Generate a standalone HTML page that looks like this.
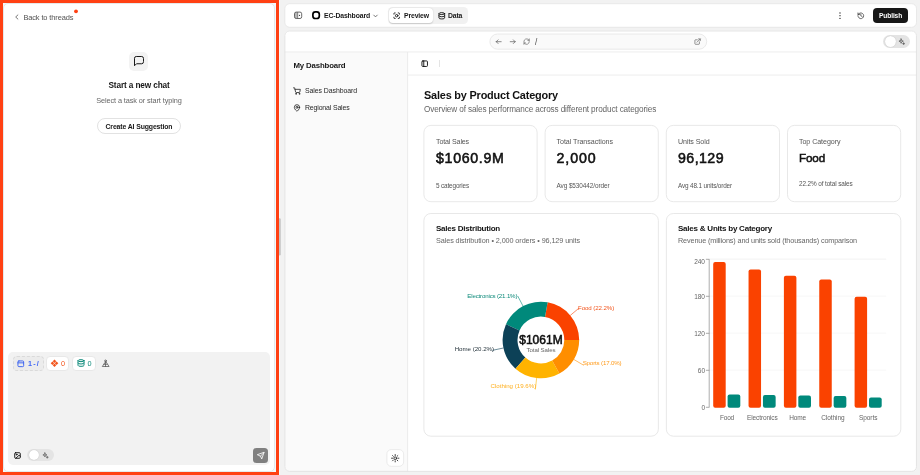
<!DOCTYPE html>
<html lang="en">
<head>
<meta charset="utf-8">
<title>EC-Dashboard</title>
<style>
*{box-sizing:border-box;margin:0;padding:0}
html,body{width:920px;height:475px;overflow:hidden;background:#f2f2f2;font-family:"Liberation Sans",sans-serif}
#app{position:relative;width:920px;height:475px;overflow:hidden;background:#f2f2f2}
#app div,#app svg,#app span{position:absolute}
.t{white-space:pre;display:block}
#txt{left:0;top:0;width:920px;height:475px;will-change:transform}
.card{background:#fff;border:1px solid #e4e4e4;border-radius:7px}
svg{overflow:visible}
.ic{fill:none;stroke:#222;stroke-width:1;stroke-linecap:round;stroke-linejoin:round}
</style>
</head>
<body>
<div id="app">
<!-- left chat panel with highlight frame -->
<div style="left:0;top:0;width:279px;height:475px;background:#f3f9fb"></div>
<div style="left:3px;top:3px;width:272px;height:469px;background:#fff;border:1px solid #e6e8ea;border-radius:5px"></div>
<div style="left:0;top:0;width:279px;height:475px;border:3px solid #ff4013"></div>
<div style="left:279px;top:0;width:1px;height:475px;background:#f4f9fa"></div>
<svg style="left:270px;top:210px" width="20" height="55" viewBox="270 210 20 55"><rect x="278.400" y="218.300" width="2.400" height="37.200" rx="1.200" fill="#c6c6c6"/><rect x="276" y="210" width="3" height="55" fill="#ff4013"/></svg>
<!-- back chevron -->
<svg style="left:13.700px;top:14.300px" width="6" height="6" viewBox="0 0 6 6"><path class="ic" style="stroke:#555;stroke-width:0.800" d="M3.900 0.900 L1.700 3 L3.900 5.100"/></svg>
<svg style="left:0;top:0" width="100" height="30"><circle cx="76" cy="11.3" r="1.9" fill="#ff4013"/></svg>
<!-- chat icon -->
<div style="left:129.3px;top:51.5px;width:19.2px;height:19.2px;border-radius:5px;background:#f3f3f3"></div>
<svg style="left:132.900px;top:54.900px" width="12" height="12" viewBox="0 0 24 24"><path class="ic" style="stroke-width:2;stroke:#1a1a1a" d="M21 14a3.500 3.500 0 0 1-3.500 3.500H7l-4 4V6.500A3.500 3.500 0 0 1 6.500 3h11A3.500 3.500 0 0 1 21 6.500z"/></svg>
<!-- create button -->
<div style="left:97.3px;top:118.2px;width:83.5px;height:15.5px;border-radius:8px;border:1px solid #e2e2e2;background:#fff"></div>
<!-- input area -->
<div style="left:8px;top:352px;width:262px;height:113px;border-radius:5px;background:#f2f2f2"></div>
<div style="left:13px;top:356px;width:30.6px;height:15px;border-radius:4px;border:1px dashed #dadada;background:#ececec"></div>
<div style="left:45.6px;top:356px;width:23.5px;height:15px;border-radius:4px;border:1px solid #e8e8e8;background:#fff"></div>
<div style="left:72px;top:356px;width:24.3px;height:15px;border-radius:4px;border:1px solid #e8e8e8;background:#fff"></div>
<!-- chip icons -->
<svg style="left:17px;top:359.5px" width="7.6" height="7.6" viewBox="0 0 24 24"><rect class="ic" style="stroke:#3b63f0;stroke-width:3" x="3" y="3" width="18" height="18" rx="3"/><path class="ic" style="stroke:#3b63f0;stroke-width:3" d="M3 9h18"/></svg>
<svg style="left:0;top:340px" width="120" height="40" viewBox="0 340 120 40"><g fill="#f2551d"><path d="M54.50 359.50L56.25 361.25L54.50 363.00L52.75 361.25Z"/><path d="M54.50 363.60L56.25 365.35L54.50 367.10L52.75 365.35Z"/><path d="M52.45 361.55L54.20 363.30L52.45 365.05L50.70 363.30Z"/><path d="M56.55 361.55L58.30 363.30L56.55 365.05L54.80 363.30Z"/></g></svg>
<svg style="left:76.8px;top:359.3px" width="8" height="8" viewBox="0 0 24 24"><g class="ic" style="stroke:#0d8a7a;stroke-width:3"><ellipse cx="12" cy="5" rx="9" ry="3"/><path d="M3 5v14a9 3 0 0 0 18 0V5"/><path d="M3 12a9 3 0 0 0 18 0"/></g></svg>
<svg style="left:0;top:340px" width="120" height="40" viewBox="0 340 120 40"><g fill="none" stroke="#555" stroke-width="0.75" stroke-linejoin="round" stroke-linecap="round"><circle cx="105.5" cy="360.9" r="0.9"/><path d="M105.5 361.800L102.300 366.500H108.700Z"/><path d="M103.800 364.300H107.200M105.500 361.800V366.500"/></g></svg>
<!-- bottom row -->
<svg style="left:14px;top:452px" width="7" height="7" viewBox="0 0 24 24"><g class="ic" style="stroke:#111;stroke-width:3.2"><rect x="2.5" y="2.5" width="19" height="19" rx="3"/><circle cx="9" cy="9" r="1.6"/><path d="M21.5 15l-4-4L6 21.5"/></g></svg>
<div style="left:27.4px;top:449.3px;width:26.3px;height:12.2px;border-radius:6.1px;background:#e4e4e4"></div>
<div style="left:29.3px;top:450.3px;width:10.2px;height:10.2px;border-radius:50%;background:#fff;box-shadow:0 0 1px rgba(0,0,0,.25)"></div>
<svg style="left:42px;top:452px" width="7" height="7" viewBox="0 0 24 24"><g class="ic" style="stroke:#555;stroke-width:2.4"><path d="M10 3l1.8 5.2L17 10l-5.2 1.8L10 17l-1.8-5.200L3 10l5.200-1.800z"/><path d="M18 15v6M15 18h6"/></g></svg>
<div style="left:253px;top:447.8px;width:15.4px;height:15.1px;border-radius:3.5px;background:#808080"></div>
<svg style="left:257px;top:451.6px" width="7.6" height="7.6" viewBox="0 0 24 24"><path class="ic" style="stroke:#fff;stroke-width:2.6" d="M22 2L11 13M22 2l-7 20-4-9-9-4z"/></svg>

<!-- top bar -->
<svg style="left:280px;top:0" width="640" height="30" viewBox="280 0 640 30"><rect x="284.800" y="3.700" width="631.700" height="23.600" rx="5" fill="#fff" stroke="#e4e4e4" stroke-width="0.8"/></svg>
<svg style="left:290px;top:8px" width="16" height="14" viewBox="290 8 16 14"><path d="M296.100 12.100H297.700V18.500H296.100A1.600 1.600 0 0 1 294.500 16.900V13.700A1.600 1.600 0 0 1 296.100 12.100Z" fill="#b8b8b8"/><rect x="294.500" y="12.100" width="7.200" height="6.400" rx="1.700" fill="none" stroke="#5a5a5a" stroke-width="0.9"/><path d="M297.700 12.100V18.500" stroke="#5a5a5a" stroke-width="0.7"/><circle cx="299.500" cy="15.300" r="0.600" fill="#222"/></svg>
<svg style="left:0;top:0" width="400" height="30"><rect x="312.9" y="11.8" width="6.4" height="6.7" rx="2.500" fill="none" stroke="#000" stroke-width="1.7"/></svg>
<svg style="left:372.5px;top:13.7px" width="5" height="4" viewBox="0 0 10 8"><path class="ic" style="stroke:#555;stroke-width:1.6" d="M1.500 2.200L5 5.800 8.500 2.200"/></svg>
<div style="left:387.6px;top:7px;width:80px;height:16.6px;border-radius:4.5px;background:#f1f1f1"></div>
<div style="left:388.6px;top:8px;width:44.600px;height:14.6px;border-radius:4px;background:#fff;box-shadow:0 0.500px 1.5px rgba(0,0,0,.18)"></div>
<svg style="left:393px;top:11.6px" width="7.4" height="7.4" viewBox="0 0 24 24"><g class="ic" style="stroke:#1a1a1a;stroke-width:3"><path d="M3 7V5a2 2 0 0 1 2-2h2M17 3h2a2 2 0 0 1 2 2v2M21 17v2a2 2 0 0 1-2 2h-2M7 21H5a2 2 0 0 1-2-2v-2"/><circle cx="12" cy="12" r="4"/></g></svg>
<svg style="left:437.8px;top:11.9px" width="7.6" height="7.6" viewBox="0 0 24 24"><g class="ic" style="stroke:#111;stroke-width:2.800"><ellipse cx="12" cy="5" rx="9" ry="3"/><path d="M3 5v14a9 3 0 0 0 18 0V5"/><path d="M3 12a9 3 0 0 0 18 0"/></g></svg>
<svg style="left:838.7px;top:11.6px" width="2" height="8" viewBox="0 0 2 8"><circle cx="1" cy="1" r="0.650" fill="#222"/><circle cx="1" cy="3.700" r="0.650" fill="#222"/><circle cx="1" cy="6.4" r="0.650" fill="#222"/></svg>
<svg style="left:856.6px;top:11.700px" width="7.6" height="7.6" viewBox="0 0 24 24"><g class="ic" style="stroke:#222;stroke-width:2.100"><path d="M3 12a9 9 0 1 0 3-6.700L3 8"/><path d="M3 3v5h5M12 7v5l4 2"/></g></svg>
<div style="left:873.1px;top:7.7px;width:35.100px;height:15.1px;border-radius:4px;background:#171717"></div>

<!-- preview frame -->
<svg style="left:280px;top:28px" width="640" height="447" viewBox="280 28 640 447">
<defs><clipPath id="pf"><rect x="284.400" y="30.500" width="632.500" height="441.300" rx="5"/></clipPath></defs>
<rect x="284.400" y="30.500" width="632.500" height="441.300" rx="5" fill="#fff"/>
<g clip-path="url(#pf)">
<rect x="284.400" y="52" width="123" height="420" fill="#fafafa"/>
<rect x="284.400" y="51.500" width="632.500" height="0.9" fill="#ebebeb"/>
<rect x="407.200" y="52" width="0.9" height="420" fill="#e9e9e9"/>
<rect x="408" y="74.600" width="509" height="0.9" fill="#ebebeb"/>
</g>
<rect x="284.850" y="30.950" width="631.600" height="440.400" rx="4.600" fill="none" stroke="#e0e0e0" stroke-width="0.9"/>
</svg>
<!-- url bar -->
<svg style="left:480px;top:28px" width="240" height="30" viewBox="480 28 240 30"><rect x="489.900" y="34" width="216.800" height="15.200" rx="7.600" fill="#fafafa" stroke="#e4e4e4" stroke-width="0.8"/></svg>
<svg style="left:495.2px;top:38.300px" width="7.4" height="7.4" viewBox="0 0 24 24"><path class="ic" style="stroke:#4a4a4a;stroke-width:2.100" d="M20 12H4M10 6l-6 6 6 6"/></svg>
<svg style="left:508.9px;top:38.300px" width="7.4" height="7.4" viewBox="0 0 24 24"><path class="ic" style="stroke:#4a4a4a;stroke-width:2.100" d="M4 12h16M14 6l6 6-6 6"/></svg>
<svg style="left:522.6px;top:38px" width="7.2" height="7.2" viewBox="0 0 24 24"><g class="ic" style="stroke:#555;stroke-width:2"><path d="M3 12a9 9 0 0 1 15.500-6.300L21 8M21 3v5h-5"/><path d="M21 12a9 9 0 0 1-15.500 6.300L3 16M3 21v-5h5"/></g></svg>
<svg style="left:693.500px;top:38px" width="7.200" height="7.200" viewBox="0 0 24 24"><g class="ic" style="stroke:#555;stroke-width:2.100"><path d="M18 13v6a2 2 0 0 1-2 2H5a2 2 0 0 1-2-2V8a2 2 0 0 1 2-2h6"/><path d="M15 3h6v6M10 14L21 3"/></g></svg>
<!-- preview toggle -->
<div style="left:883.3px;top:35px;width:26.700px;height:13.2px;border-radius:6.6px;background:#e4e4e4"></div>
<div style="left:885px;top:36px;width:11.200px;height:11.200px;border-radius:50%;background:#fff;box-shadow:0 0 1px rgba(0,0,0,.25)"></div>
<svg style="left:898px;top:38px" width="7.500" height="7.500" viewBox="0 0 24 24"><g class="ic" style="stroke:#555;stroke-width:2.400"><path d="M10 3l1.800 5.200L17 10l-5.200 1.800L10 17l-1.800-5.200L3 10l5.200-1.800z"/><path d="M18 15v6M15 18h6"/></g></svg>

<!-- sidebar icons -->
<svg style="left:293px;top:86.500px" width="8" height="8" viewBox="0 0 24 24"><g class="ic" style="stroke:#222;stroke-width:2.400"><circle cx="9" cy="20.500" r="1.300"/><circle cx="19" cy="20.500" r="1.300"/><path d="M1.500 2.500h3.500l2.700 12.400a2 2 0 0 0 2 1.600h8.800a2 2 0 0 0 2-1.600L22 7H6"/></g></svg>
<svg style="left:293px;top:103.500px" width="8" height="8" viewBox="0 0 24 24"><g class="ic" style="stroke:#222;stroke-width:2.400"><path d="M20 10c0 6-8 12-8 12s-8-6-8-12a8 8 0 0 1 16 0z"/><circle cx="12" cy="10" r="3"/></g></svg>
<!-- main toolbar -->
<svg style="left:420.900px;top:59.950px" width="7.400" height="7.400" viewBox="0 0 24 24"><g class="ic" style="stroke:#111;stroke-width:3"><rect x="3" y="3" width="18" height="18" rx="3"/><path d="M9 3v18"/></g></svg>
<div style="left:438.500px;top:60px;width:1px;height:7px;background:#e4e4e4"></div>
<!-- theme button -->
<svg style="left:380px;top:440px" width="40" height="35" viewBox="380 440 40 35"><rect x="386.9" y="449.600" width="16.700" height="16.700" rx="4.300" fill="#fff" stroke="#e6e6e6" stroke-width="0.8"/><g fill="none" stroke="#222" stroke-width="0.85" stroke-linecap="round"><circle cx="395.200" cy="458.200" r="1.350"/><path d="M395.200 454.500v1.100M395.200 460.800v1.100M391.500 458.200h1.100M397.800 458.200h1.100M392.580 455.580l.78.78M397.040 460.040l.78.780M392.580 460.820l.78-.78M397.040 456.360l.780-.78"/></g></svg>


<!-- cards and charts -->
<svg style="left:0;top:0" width="920" height="475" viewBox="0 0 920 475">
<rect x="423.90" y="125.40" width="113.20" height="76.30" rx="7" fill="#fff" stroke="#e2e2e2" stroke-width="0.8"/>
<rect x="545.10" y="125.40" width="113.20" height="76.30" rx="7" fill="#fff" stroke="#e2e2e2" stroke-width="0.8"/>
<rect x="666.30" y="125.40" width="113.20" height="76.30" rx="7" fill="#fff" stroke="#e2e2e2" stroke-width="0.8"/>
<rect x="787.50" y="125.40" width="113.20" height="76.30" rx="7" fill="#fff" stroke="#e2e2e2" stroke-width="0.8"/>
<rect x="423.90" y="213.50" width="234.45" height="222.70" rx="7" fill="#fff" stroke="#e2e2e2" stroke-width="0.8"/>
<rect x="666.35" y="213.50" width="234.45" height="222.70" rx="7" fill="#fff" stroke="#e2e2e2" stroke-width="0.8"/>
<path d="M579.20 340.00A38.3 38.3 0 0 0 547.66 302.30L545.03 316.97A23.4 23.4 0 0 1 564.30 340.00Z" fill="#fa4200"/>
<path d="M570.27 315.42L579.09 308.04" stroke="#fa4200" stroke-width="0.6" fill="none"/>
<path d="M547.66 302.30A38.3 38.3 0 0 0 505.99 324.25L519.57 330.38A23.4 23.4 0 0 1 545.03 316.97Z" fill="#00897b"/>
<path d="M523.05 306.12L517.69 295.94" stroke="#00897b" stroke-width="0.6" fill="none"/>
<path d="M505.99 324.25A38.3 38.3 0 0 0 515.46 368.63L525.36 357.49A23.4 23.4 0 0 1 519.57 330.38Z" fill="#0c4157"/>
<path d="M503.44 347.99L492.20 350.39" stroke="#0c4157" stroke-width="0.6" fill="none"/>
<path d="M515.46 368.63A38.3 38.3 0 0 0 559.39 373.54L552.19 360.49A23.4 23.4 0 0 1 525.36 357.49Z" fill="#ffb300"/>
<path d="M536.64 378.06L535.36 389.49" stroke="#ffb300" stroke-width="0.6" fill="none"/>
<path d="M559.39 373.54A38.3 38.3 0 0 0 579.20 340.00L564.30 340.00A23.4 23.4 0 0 1 552.19 360.49Z" fill="#ff8e00"/>
<path d="M573.88 359.48L583.78 365.33" stroke="#ff8e00" stroke-width="0.6" fill="none"/>
<path d="M705.9 407.3H709.4" stroke="#8a8a8a" stroke-width="0.7"/>
<path d="M709.4 370.1H886.2" stroke="#f3f3f3" stroke-width="0.7"/>
<path d="M705.9 370.3H709.4" stroke="#8a8a8a" stroke-width="0.7"/>
<path d="M709.4 333.1H886.2" stroke="#f3f3f3" stroke-width="0.7"/>
<path d="M705.9 333.3H709.4" stroke="#8a8a8a" stroke-width="0.7"/>
<path d="M709.4 296.1H886.2" stroke="#f3f3f3" stroke-width="0.7"/>
<path d="M705.9 296.3H709.4" stroke="#8a8a8a" stroke-width="0.7"/>
<path d="M709.4 259.1H886.2" stroke="#f3f3f3" stroke-width="0.7"/>
<path d="M705.9 259.3H709.4" stroke="#8a8a8a" stroke-width="0.7"/>
<path d="M709.1999999999999 259V407.3" stroke="#8a8a8a" stroke-width="0.7"/>
<path d="M709.4 259.1H886.2" stroke="#f3f3f3" stroke-width="0.7"/>
<rect x="713.20" y="262.10" width="12.5" height="145.60" rx="2" fill="#fa4200"/>
<rect x="727.60" y="394.50" width="12.7" height="13.20" rx="2" fill="#00897b"/>
<rect x="748.55" y="269.60" width="12.5" height="138.10" rx="2" fill="#fa4200"/>
<rect x="762.95" y="395.10" width="12.7" height="12.60" rx="2" fill="#00897b"/>
<rect x="783.90" y="275.70" width="12.5" height="132.00" rx="2" fill="#fa4200"/>
<rect x="798.30" y="395.60" width="12.7" height="12.10" rx="2" fill="#00897b"/>
<rect x="819.25" y="279.50" width="12.5" height="128.20" rx="2" fill="#fa4200"/>
<rect x="833.65" y="396.00" width="12.7" height="11.70" rx="2" fill="#00897b"/>
<rect x="854.60" y="296.70" width="12.5" height="111.00" rx="2" fill="#fa4200"/>
<rect x="869.00" y="397.40" width="12.7" height="10.30" rx="2" fill="#00897b"/>
</svg>

<!-- text -->
<div id="txt">
<span class="t" style="left:23.40px;top:13px;font-size:7.45px;line-height:10px;letter-spacing:-0.117px;color:#525252;">Back to threads</span>
<span class="t" style="left:108.50px;top:80px;font-size:8.25px;line-height:12px;letter-spacing:-0.132px;color:#171717;font-weight:700;">Start a new chat</span>
<span class="t" style="left:96.25px;top:96px;font-size:7.34px;line-height:10px;letter-spacing:-0.102px;color:#666;">Select a task or start typing</span>
<span class="t" style="left:105.50px;top:122px;font-size:6.89px;line-height:10px;letter-spacing:-0.117px;color:#171717;font-weight:700;">Create AI Suggestion</span>
<span class="t" style="left:27.90px;top:359px;font-size:7.2px;line-height:10px;letter-spacing:-0.378px;color:#3f66f5;font-weight:700;">1 - /</span>
<span class="t" style="left:60.90px;top:359px;font-size:7.3px;line-height:10px;letter-spacing:0.037px;color:#f2551d;">0</span>
<span class="t" style="left:87.60px;top:359px;font-size:7.3px;line-height:10px;letter-spacing:0.037px;color:#0d8a7a;">0</span>
<span class="t" style="left:324.00px;top:11px;font-size:6.85px;line-height:10px;letter-spacing:-0.129px;color:#171717;font-weight:700;">EC-Dashboard</span>
<span class="t" style="left:404.00px;top:11px;font-size:6.85px;line-height:10px;letter-spacing:-0.125px;color:#171717;font-weight:700;">Preview</span>
<span class="t" style="left:448.00px;top:11px;font-size:6.85px;line-height:10px;letter-spacing:-0.136px;color:#171717;font-weight:700;">Data</span>
<span class="t" style="left:879.10px;top:11px;font-size:6.59px;line-height:9px;letter-spacing:-0.113px;color:#ffffff;font-weight:700;">Publish</span>
<span class="t" style="left:535.00px;top:37px;font-size:8.16px;line-height:11px;letter-spacing:-0.078px;color:#444;">/</span>
<span class="t" style="left:293.50px;top:60px;font-size:7.82px;line-height:11px;letter-spacing:-0.154px;color:#171717;font-weight:700;">My Dashboard</span>
<span class="t" style="left:305.00px;top:86px;font-size:6.95px;line-height:10px;letter-spacing:-0.082px;color:#262626;">Sales Dashboard</span>
<span class="t" style="left:305.00px;top:103px;font-size:6.95px;line-height:10px;letter-spacing:-0.155px;color:#262626;">Regional Sales</span>
<span class="t" style="left:424.00px;top:88px;font-size:10.9px;line-height:15px;letter-spacing:-0.189px;color:#111;font-weight:700;">Sales by Product Category</span>
<span class="t" style="left:424.00px;top:104px;font-size:8.18px;line-height:11px;letter-spacing:-0.123px;color:#666;">Overview of sales performance across different product categories</span>
<span class="t" style="left:436.00px;top:137px;font-size:7.1px;line-height:10px;letter-spacing:-0.155px;color:#555;">Total Sales</span>
<span class="t" style="left:436.00px;top:148px;font-size:14.2px;line-height:20px;letter-spacing:0.674px;color:#111;-webkit-text-stroke:0.55px #111;">$1060.9M</span>
<span class="t" style="left:436.00px;top:181px;font-size:6.4px;line-height:9px;letter-spacing:-0.152px;color:#555;">5 categories</span>
<span class="t" style="left:556.50px;top:137px;font-size:7.1px;line-height:10px;letter-spacing:-0.037px;color:#555;">Total Transactions</span>
<span class="t" style="left:556.50px;top:148px;font-size:14.2px;line-height:20px;letter-spacing:0.897px;color:#111;-webkit-text-stroke:0.55px #111;">2,000</span>
<span class="t" style="left:556.50px;top:181px;font-size:6.4px;line-height:9px;letter-spacing:-0.074px;color:#555;">Avg $530442/order</span>
<span class="t" style="left:678.00px;top:137px;font-size:7.1px;line-height:10px;letter-spacing:-0.084px;color:#555;">Units Sold</span>
<span class="t" style="left:678.00px;top:148px;font-size:14.2px;line-height:20px;letter-spacing:0.432px;color:#111;-webkit-text-stroke:0.55px #111;">96,129</span>
<span class="t" style="left:678.00px;top:181px;font-size:6.4px;line-height:9px;letter-spacing:-0.155px;color:#555;">Avg 48.1 units/order</span>
<span class="t" style="left:799.00px;top:137px;font-size:7.1px;line-height:10px;letter-spacing:-0.059px;color:#555;">Top Category</span>
<span class="t" style="left:799.00px;top:150px;font-size:11.7px;line-height:16px;letter-spacing:-0.160px;color:#111;-webkit-text-stroke:0.5px #111;">Food</span>
<span class="t" style="left:799.00px;top:179px;font-size:6.4px;line-height:9px;letter-spacing:-0.114px;color:#555;">22.2% of total sales</span>
<span class="t" style="left:436.00px;top:223px;font-size:8.0px;line-height:11px;letter-spacing:-0.223px;color:#111;font-weight:700;">Sales Distribution</span>
<span class="t" style="left:436.00px;top:236px;font-size:7.25px;line-height:10px;letter-spacing:-0.095px;color:#666;">Sales distribution • 2,000 orders • 96,129 units</span>
<span class="t" style="left:678.00px;top:223px;font-size:8.0px;line-height:11px;letter-spacing:-0.224px;color:#111;font-weight:700;">Sales &amp; Units by Category</span>
<span class="t" style="left:678.00px;top:236px;font-size:7.25px;line-height:10px;letter-spacing:-0.135px;color:#666;">Revenue (millions) and units sold (thousands) comparison</span>
<span class="t" style="left:519.20px;top:332px;font-size:12px;line-height:17px;letter-spacing:0.038px;color:#111;-webkit-text-stroke:0.55px #111;">$1061M</span>
<span class="t" style="left:526.50px;top:345px;font-size:6.14px;line-height:9px;letter-spacing:-0.093px;color:#666;">Total Sales</span>
<span class="t" style="left:467.30px;top:291px;font-size:6.15px;line-height:9px;letter-spacing:-0.171px;color:#0d8a7a;">Electronics (21.1%)</span>
<span class="t" style="left:578.00px;top:303px;font-size:6.15px;line-height:9px;letter-spacing:-0.085px;color:#f2551d;">Food (22.2%)</span>
<span class="t" style="left:582.70px;top:358px;font-size:6.15px;line-height:9px;letter-spacing:-0.162px;color:#ff9a1a;">Sports (17.0%)</span>
<span class="t" style="left:490.50px;top:381px;font-size:6.15px;line-height:9px;letter-spacing:-0.003px;color:#ffb020;">Clothing (19.6%)</span>
<span class="t" style="left:454.70px;top:344px;font-size:6.15px;line-height:9px;letter-spacing:-0.024px;color:#26343c;">Home (20.2%)</span>
<span class="t" style="left:694.14px;top:257px;font-size:6.5px;line-height:9px;letter-spacing:0.000px;color:#666;">240</span>
<span class="t" style="left:694.14px;top:292px;font-size:6.5px;line-height:9px;letter-spacing:0.000px;color:#666;">180</span>
<span class="t" style="left:694.14px;top:329px;font-size:6.5px;line-height:9px;letter-spacing:0.000px;color:#666;">120</span>
<span class="t" style="left:697.77px;top:366px;font-size:6.5px;line-height:9px;letter-spacing:0.000px;color:#666;">60</span>
<span class="t" style="left:701.38px;top:403px;font-size:6.5px;line-height:9px;letter-spacing:0.000px;color:#666;">0</span>
<span class="t" style="left:720.00px;top:413px;font-size:6.5px;line-height:9px;letter-spacing:-0.207px;color:#666;">Food</span>
<span class="t" style="left:747.05px;top:413px;font-size:6.5px;line-height:9px;letter-spacing:-0.118px;color:#666;">Electronics</span>
<span class="t" style="left:789.35px;top:413px;font-size:6.5px;line-height:9px;letter-spacing:-0.211px;color:#666;">Home</span>
<span class="t" style="left:821.15px;top:413px;font-size:6.5px;line-height:9px;letter-spacing:-0.045px;color:#666;">Clothing</span>
<span class="t" style="left:858.95px;top:413px;font-size:6.5px;line-height:9px;letter-spacing:-0.049px;color:#666;">Sports</span>
</div>
</div>
</body>
</html>
